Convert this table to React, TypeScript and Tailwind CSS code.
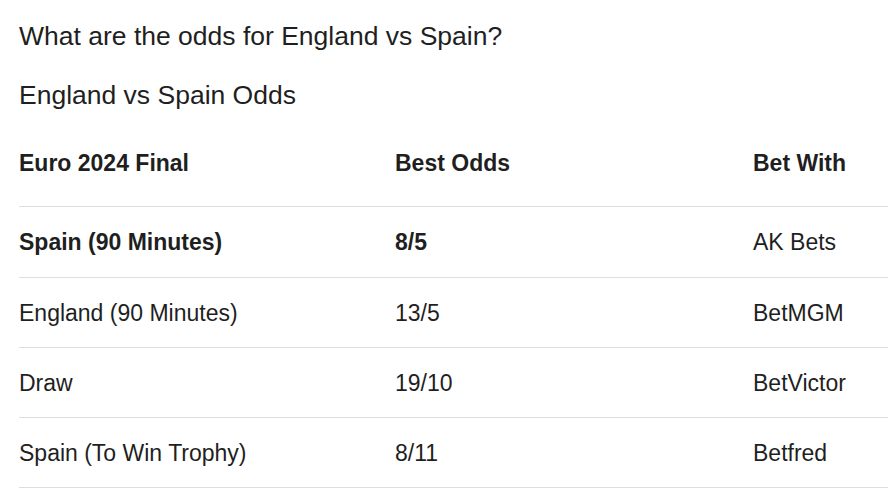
import React from 'react';

const rows = [
  { name: 'Spain (90 Minutes)', odds: '8/5', bookie: 'AK Bets', bold: true },
  { name: 'England (90 Minutes)', odds: '13/5', bookie: 'BetMGM' },
  { name: 'Draw', odds: '19/10', bookie: 'BetVictor' },
  { name: 'Spain (To Win Trophy)', odds: '8/11', bookie: 'Betfred' },
];

const App = (): JSX.Element => {
  return (
    <div
      className="w-[888px] h-[499px] overflow-hidden bg-white pl-[19px] pt-[21px] text-[#1f1f1f]"
      style={{ fontFamily: '"Liberation Sans", Arial, sans-serif' }}
    >
      <h2 className="text-[26.5px] leading-[30px]">What are the odds for England vs Spain?</h2>
      <h3 className="mt-[29px] text-[26.5px] leading-[30px]">England vs Spain Odds</h3>

      <div className="mt-[41px] w-[1000px]">
        <div className="grid grid-cols-[376px_358px_1fr] border-b border-[#ddd] pb-[31px] text-[23px] leading-[24px] font-bold">
          <div>Euro 2024 Final</div>
          <div>Best Odds</div>
          <div>Bet With</div>
        </div>
        {rows.map((row, i) => (
          <div
            key={row.name}
            className={`grid grid-cols-[376px_358px_1fr] items-center border-b border-[#ddd] text-[23px] leading-[24px] ${
              i === 0 ? 'h-[71px]' : 'h-[70px]'
            }`}
          >
            <div className={row.bold ? 'font-bold' : ''}>{row.name}</div>
            <div className={row.bold ? 'font-bold' : ''}>{row.odds}</div>
            <div>{row.bookie}</div>
          </div>
        ))}
      </div>
    </div>
  );
};

export default App;
